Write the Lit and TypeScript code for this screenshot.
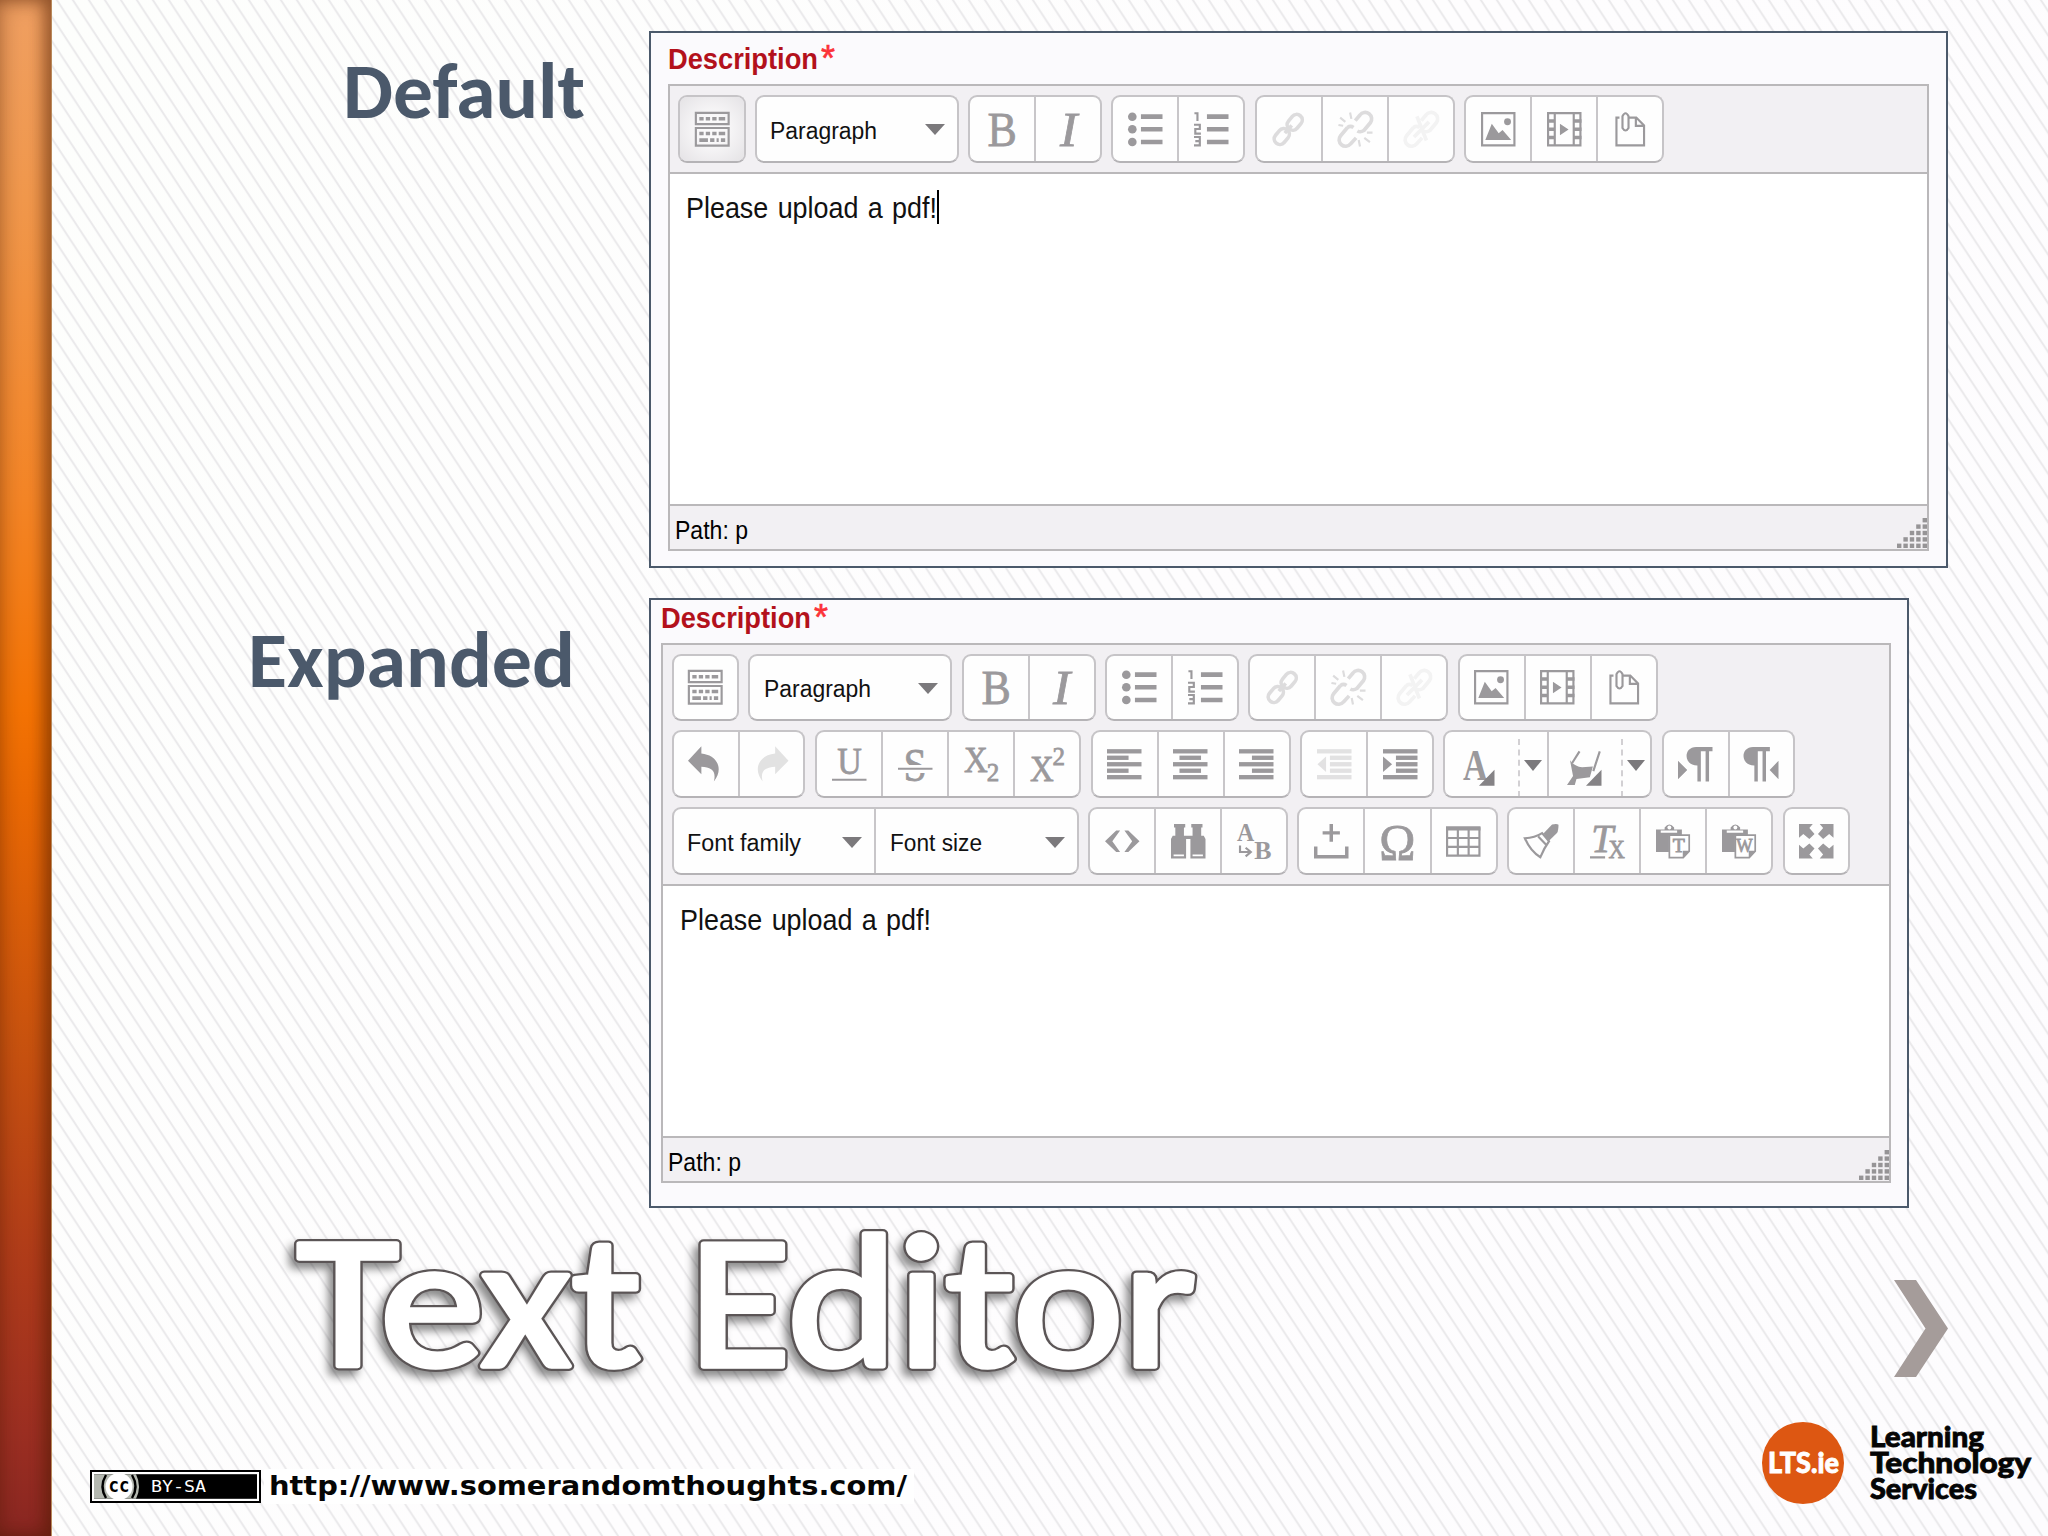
import { LitElement, html, svg, css, nothing, TemplateResult } from "lit";
import { customElement, property } from "lit/decorators.js";

type Glyph = TemplateResult;

const letter = (ch: string, x: number, y: number, size: number, len: number, cls = "") =>
  svg`<text class="glyph ${cls}" x=${x} y=${y} font-size=${size} textLength=${len} lengthAdjust="spacingAndGlyphs">${ch}</text>`;

const bars = (rows: number[][]) =>
  rows.map((r, i) => svg`<rect x=${r[0]} y=${1 + i * 3} width=${r[1]} height="2"/>`);

const link = svg`<g class="line thick"><rect x="-4" y="-2.6" width="8" height="5.2" rx="2.6" transform="translate(11 4.8) rotate(-50)"/><rect x="-4" y="-2.6" width="8" height="5.2" rx="2.6" transform="translate(5 11.4) rotate(-50)"/><path d="M6.4 9.8L9.6 6.2"/></g>`;
const broken = svg`<g class="line thick"><path d="M8 4L10.2 1.4A2.8 2.8 0 0 1 15 5L12 8.6Q10.4 9.6 9 8.8"/><path d="M4.4 7.2L1.2 11A2.8 2.8 0 0 0 5.8 14.8L8.4 12M4.4 7.2Q5.8 6.2 7.2 7.2"/></g>`;
const clipboard = svg`<path d="M0 2.5H4V1.6Q6.2 -1.2 8.4 1.6V2.5H12V5.2H6V13H0Z"/><path class="paper" d="M2.2 3H9.8V4H2.2Z"/><circle class="paper" cx="6.2" cy="1.6" r=".9"/><path class="sheet" d="M6.2 5.2H15.4V12.6L12.6 15.6H6.2Z"/><path d="M12.4 15.8V12.4H15.6Z"/>`;

const icons: Record<string, Glyph> = {
  toggle: svg`<path class="line" d="M.4 .4H15.6V5.6H.4ZM.4 7.4H15.6V15.6H.4Z"/><path d="M2 2.3h2v1.6h-2zM5 2.3h2v1.6h-2zM8 2.3h2v1.6h-2zM11 2.3h3v1.6h-3zM2 9.2h2v1.6h-2zM5 9.2h2v1.6h-2zM8 9.2h2v1.6h-2zM11 9.2h3v1.6h-3zM2 12.2h4v1.7h-4zM7 12.2h2v1.7h-2zM10 12.2h1v1.7h-1zM12 12.2h2v1.7h-2z"/>`,
  bold: letter("B", 1.2, 15.6, 22.6, 13.6, "heavy"),
  italic: letter("I", 4.2, 15.6, 22.6, 8, "slant heavy"),
  bullets: svg`<circle cx="2" cy="2.2" r="2"/><circle cx="2" cy="8" r="2"/><circle cx="2" cy="13.9" r="2"/><path d="M6 1.1H16V3.2H6ZM6 7H16V9.1H6ZM6 12.9H16V15H6Z"/>`,
  numbers: svg`<path d="M6 1.1H16V3.2H6ZM6 7H16V9.1H6ZM6 12.9H16V15H6Z"/><path class="line" d="M.2 .6H1.6V4.2M0 5.9H2.7V7.9H.6V10H3.2M0 11.6H2.7V15.5H0M.6 13.5H2.7"/>`,
  link: svg`<g class="off">${link}</g>`,
  unlink: svg`<g class="off">${broken}<path class="line" d="M1 2.6L3.4 4.6M5.6 .2L6.2 3.2M.2 6L2.4 6.4M13.4 9.6H16M12.2 12L14.8 14M9.6 13L10.2 16"/></g>`,
  nolink: svg`<g class="faint">${broken}<path class="line thick" d="M6 2L10.4 13.2M4.6 11.6L11.6 4.6"/></g>`,
  image: svg`<path class="line" d="M.5 .5H15.5V15.5H.5Z"/><path d="M2 13L5 5.4L8.2 9.8L10 8.4L14 13Z"/><circle cx="12.3" cy="4.5" r="1.6"/>`,
  media: svg`<path class="line" d="M.5 .5H15.5V15.5H.5ZM3.6 .5V15.5M12.4 .5V15.5"/><path d="M0 3.4h3.6v1.6h-3.6zM0 7.2h3.6v1.6h-3.6zM0 11h3.6v1.6h-3.6zM12.4 3.4h3.6v1.6h-3.6zM12.4 7.2h3.6v1.6h-3.6zM12.4 11h3.6v1.6h-3.6zM6 5.4L10 8.1L6 10.8Z"/>`,
  attach: svg`<path class="line" d="M3 2.6H1.6V15.5H14.4V6.2L10.8 2.6H6.8M10.6 2.6V6.4H14.4M4.4 3.6V7.4Q5.8 9.8 7.2 7.4V2Q5.8 -.8 4.4 2V3.6"/>`,
  undo: svg`<path d="M0 6.4L6.2 -.4V3C13 3.6 17 9.6 12 16C13.2 11 11 9.6 6.2 9.2V12.6Z"/>`,
  redo: svg`<g class="pale"><path d="M16 6.4L9.8 -.4V3C3 3.6 -1 9.6 4 16C2.8 11 5 9.6 9.8 9.2V12.6Z"/></g>`,
  underline: svg`${letter("U", 2.4, 12.6, 18, 11.4, "heavy")}<path d="M0 14.7H16V15.7H0Z"/>`,
  strike: svg`${letter("S", 2.6, 15.6, 22, 10.8, "heavy")}<path class="paper" d="M0 8.4H16V12H0Z"/><path d="M0 9.6H16V10.6H0Z"/>`,
  sub: svg`${letter("X", 0, 11.6, 16.6, 11, "heavy")}${letter("2", 10.6, 15.6, 11.4, 5.8, "heavy")}`,
  sup: svg`${letter("X", 0, 15.6, 16.6, 11, "heavy")}${letter("2", 10.4, 8.2, 11.4, 5.8, "heavy")}`,
  left: svg`${bars([[0, 16], [0, 10], [0, 16], [0, 10], [0, 16]])}`,
  center: svg`${bars([[0, 16], [3, 10], [0, 16], [3, 10], [0, 16]])}`,
  right: svg`${bars([[0, 16], [6, 10], [0, 16], [6, 10], [0, 16]])}`,
  outdent: svg`<g class="pale">${bars([[0, 16], [6, 10], [6, 10], [6, 10], [0, 16]])}<path d="M4.2 4.4V11.6L.2 8Z"/></g>`,
  indent: svg`${bars([[0, 16], [6, 10], [6, 10], [6, 10], [0, 16]])}<path d="M0 4.4V11.6L4.2 8Z"/>`,
  color: svg`${letter("A", 0, 15.4, 20.5, 11.4, "black")}<path class="dark" d="M14.6 10.6V18H7.4Z"/>`,
  marker: svg`<path class="line" d="M5.8 2L2.4 7.4M15.2 2L12.2 11.2"/><path d="M1.4 6.2Q3.4 9 7 9.4L12 9L10.6 14L4.4 14.8L3.6 17.6H0L2.8 13.4Z"/><path class="dark" d="M16 10.6V18H8.8Z"/>`,
  ltr: svg`<path d="M0 6.4V15L4.3 10.7ZM16 0V2H14.4V16H12.8V2H10.6V16H9V8.6C2.4 8.6 2.4 0 8.4 0Z"/>`,
  rtl: svg`<path d="M16 6.4V15L11.9 10.7ZM12 0V2H10.2V16H8.6V2H6.4V16H4.8V8.6C-1.8 8.6 -1.8 0 4.2 0Z"/>`,
  code: svg`<path d="M5.2 3H7L3.4 8L7 13H5.2L0 8ZM10.8 3H9L12.6 8L9 13H10.8L16 8Z"/>`,
  find: svg`<path d="M1.4 0H6.6V1.6H6V5.4H10V1.6H9.4V0H14.6V1.6H14V5.4H15.2L16 7V16H9V7H7V16H0V7L.8 5.4H2V1.6H1.4Z"/><path class="paper" d="M1.2 14.2H6V15H1.2ZM10 14.2H14.8V15H10Z"/>`,
  replace: svg`${letter("A", 0, 7.8, 11.4, 8, "black")}${letter("B", 8, 16, 11.8, 8, "black")}<path class="line" d="M1.4 10V13H6M4 11L6.4 13L4 15"/>`,
  nbsp: svg`<path d="M7.2 0H8.8V3.4H12V4.9H8.8V8.2H7.2V4.9H4V3.4H7.2ZM0 10.4H1.6V14.4H14.4V10.4H16V16H0Z"/>`,
  omega: letter("Ω", -.4, 16, 23.4, 16.8, "heavy"),
  table: svg`<path d="M0 1H16V3H0Z"/><path class="line" d="M.5 1.5V14.7H15.5V1.5M.5 6.5H15.5M.5 10.6H15.5M5.5 2V14.7M10.5 2V14.7"/>`,
  brush: svg`<path d="M9 4.4L13 .2Q15.4 -.4 16 .4Q16 3 15.4 4L11.6 7.8Z"/><path class="line" d="M.4 6.6Q5 6.4 8.4 4.2L11.6 8Q9.4 11 7.6 15.4Q3 12.6 .4 6.6ZM6.6 5.8L10.6 10"/>`,
  clear: svg`${letter("T", .6, 13, 18.6, 10.2, "slant heavy")}${letter("X", 8.6, 15.8, 12, 7.6, "heavy")}<path d="M0 15H7V16H0Z"/>`,
  pasteText: svg`${clipboard}${letter("T", 7.8, 13, 8.4, 5.6, "heavy")}`,
  pasteWord: svg`${clipboard}${letter("W", 6.6, 13, 8.4, 7.6, "heavy")}`,
  full: svg`<path d="M0 0H6.4L4.8 1.8L7.2 4.6L4.8 7L2 4.6L0 6.4ZM16 0H9.6L11.2 1.8L8.8 4.6L11.2 7L14 4.6L16 6.4ZM0 16H6.4L4.8 14.2L7.2 11.4L4.8 9L2 11.4L0 9.6ZM16 16H9.6L11.2 14.2L8.8 11.4L11.2 9L14 11.4L16 9.6Z"/>`,
};

interface Select { label: string; width: number }
type Item = string | Select;
interface Group { items: Item[]; width: number; split?: boolean }

const cells = (...items: string[]): Group => ({ items, width: items.length * 66.3 + 1.3 });

const rowOne: Group[] = [
  cells("toggle"),
  { items: [{ label: "Paragraph", width: 107 }], width: 204 },
  cells("bold", "italic"),
  cells("bullets", "numbers"),
  cells("link", "unlink", "nolink"),
  cells("image", "media", "attach"),
];
const rowTwo: Group[] = [
  cells("undo", "redo"),
  cells("underline", "strike", "sub", "sup"),
  cells("left", "center", "right"),
  cells("outdent", "indent"),
  { items: ["color", "marker"], width: 209, split: true },
  cells("ltr", "rtl"),
];
const rowThree: Group[] = [
  { items: [{ label: "Font family", width: 114 }, { label: "Font size", width: 92 }], width: 407 },
  cells("code", "find", "replace"),
  cells("nbsp", "omega", "table"),
  cells("brush", "clear", "pasteText", "pasteWord"),
  cells("full"),
];

const fitted = (text: string, cls: string, w: number, h: number, base: number) =>
  html`<svg class="fit ${cls}" width=${w} height=${h}><text x="0" y=${base} textLength=${w} lengthAdjust="spacingAndGlyphs">${text}</text></svg>`;

const fitCss = css`
  .fit { display: block; flex: none; overflow: visible; font-family: "Liberation Sans", Arial, sans-serif; }
`;

@customElement("text-editor")
class TextEditor extends LitElement {
  @property({ attribute: false }) rows: Group[] = [];
  @property({ type: Boolean }) pressed = false;
  @property({ type: Boolean }) caret = false;

  static styles = [fitCss, css`
    :host { display: flex; flex-direction: column; box-sizing: border-box; border: 2px solid #bab8ba; background: #fff; }
    .toolbar { display: flex; flex-direction: column; gap: 9.4px; padding: 9px 8.6px; background: #f2f0f3; border-bottom: 2px solid #bab8ba; }
    .row { display: flex; gap: 9.3px; }
    .group { display: flex; flex: none; box-sizing: border-box; height: 67.6px; border: 2px solid #c6c4c7; border-bottom-color: #b5b3b6; border-radius: 9px; background: #fefefe; overflow: hidden; }
    .cell { flex: 1 1 0; display: flex; align-items: center; justify-content: center; }
    .cell + .cell { border-left: 2px solid #c8c6c9; }
    .pressed { background: radial-gradient(circle at 50% 50%, #fbfafb 25%, #e4e2e5 100%); }
    .select { justify-content: space-between; padding: 4px 12px 0 13.5px; }
    .split { justify-content: flex-start; padding-left: 18px; }
    .divider { height: 58px; margin: 7px 4px 0 20px; border-left: 2px dashed #d2d0d3; }
    .icon { display: block; flex: none; width: 34.5px; height: 34.5px; overflow: visible; fill: #9b999c; }
    .arrow { display: block; flex: none; width: 20px; height: 11px; fill: #7b797c; margin-top: -2px; }
    .arrow.small { width: 18px; margin: 2px 0 0; }
    .line { fill: none; stroke: #9b999c; stroke-width: 1; }
    .thick, .thick * { stroke-width: 1.7; }
    .paper { fill: #fff; }
    .sheet { fill: #fff; stroke: #9b999c; stroke-width: .8; }
    .dark { fill: #858386; }
    .glyph { font-family: "Liberation Serif", "Times New Roman", serif; }
    .heavy { stroke: #9b999c; stroke-width: .35; }
    .black { font-weight: 700; }
    .slant { font-style: italic; }
    .off { opacity: .33; }
    .pale { opacity: .28; }
    .faint { opacity: .11; }
    .body { flex: 1; display: flex; align-items: flex-start; padding: 16px 16.5px; }
    .copy { font-size: 29px; fill: #111; word-spacing: 2px; }
    .caret { width: 2px; height: 34px; background: #000; }
    .status { display: flex; justify-content: space-between; align-items: flex-end; height: 43px; padding-left: 5px; background: #f2f0f3; border-top: 2px solid #bab8ba; }
    .path { font-size: 26px; fill: #000; }
    .name { font-size: 23px; fill: #111; }
    .grip { display: block; fill: #969496; }
  `];

  private icon(name: string) {
    return html`<svg class="icon" viewBox="0 0 16 16">${icons[name]}</svg>`;
  }

  private arrow(small = false) {
    return html`<svg class="arrow ${small ? "small" : ""}" viewBox="0 0 20 11" preserveAspectRatio="none"><path d="M0 0H20L10 11Z"/></svg>`;
  }

  private cell(item: Item, group: Group) {
    if (typeof item !== "string")
      return html`<div class="cell select">${fitted(item.label, "name", item.width, 26, 21)}${this.arrow()}</div>`;
    if (group.split)
      return html`<div class="cell split">${this.icon(item)}<span class="divider"></span>${this.arrow(true)}</div>`;
    return html`<div class="cell ${item === "toggle" && this.pressed ? "pressed" : ""}">${this.icon(item)}</div>`;
  }

  render() {
    const dots: TemplateResult[] = [];
    for (let r = 0; r < 5; r++)
      for (let c = 4 - r; c < 5; c++)
        dots.push(svg`<rect x=${c * 6.4} y=${r * 6.4} width="4.4" height="4.4"/>`);
    return html`
      <div class="toolbar">
        ${this.rows.map((row) => html`<div class="row">${row.map((g) => html`
          <div class="group" style="width:${g.width}px">${g.items.map((i) => this.cell(i, g))}</div>`)}</div>`)}
      </div>
      <div class="body">
        ${fitted("Please upload a pdf!", "copy", 251, 34, 28.2)}
        ${this.caret ? html`<span class="caret"></span>` : nothing}
      </div>
      <div class="status">
        ${fitted("Path: p", "path", 73, 43, 32.5)}
        <svg class="grip" width="30" height="31">${dots}</svg>
      </div>`;
  }
}

@customElement("app-root")
class AppRoot extends LitElement {
  static styles = [fitCss, css`
    :host { display: block; width: 2048px; height: 1536px; overflow: hidden; }
    .slide { display: grid; grid-template-columns: 52px 1fr; width: 2048px; height: 1536px; position: relative; background: linear-gradient(120deg, #fdfefc, #fefdfe 50%, #fdfcfe); }
    .stripes { position: absolute; inset: 0; width: 100%; height: 100%; }
    .bar { position: relative; border-right: 1px solid #b98a5c; box-sizing: border-box; background: linear-gradient(180deg, #f0a062 0, #f1984c 200px, #f48526 500px, #f47304 710px, #ea6904 800px, #c9530f 1040px, #b03c1a 1260px, #9c2f22 1430px, #8a2722 1536px); box-shadow: inset 0 0 22px rgba(70, 25, 0, .42), inset -8px 0 14px rgba(80, 30, 0, .35); }
    .main { position: relative; display: flex; flex-direction: column; padding-top: 30.5px; }
    .section { display: flex; align-items: flex-start; margin-bottom: 30px; }
    .side { width: 597px; flex: none; display: flex; justify-content: flex-end; box-sizing: border-box; }
    .first { padding: 27.5px 64px 0 0; }
    .second { padding: 28.5px 74px 0 0; }
    .head { font-family: Carlito, Lato, sans-serif; font-weight: 700; font-size: 78px; fill: #4b596b; }
    .panel { display: flex; flex-direction: column; box-sizing: border-box; border: 2px solid #4b596b; background: #fbfafd; }
    .one { width: 1298.5px; height: 537.5px; padding: 0 17px 15.5px 16.5px; }
    .two { width: 1260px; height: 610px; padding: 0 16.5px 23.5px 10px; }
    .field { display: flex; flex: none; }
    .one .field { height: 51.5px; }
    .two .field { height: 42.5px; }
    .desc { font-size: 29px; font-weight: 700; fill: #b3111c; }
    .star { font-size: 36px; fill: #fb3238; stroke: #fb3238; stroke-width: .6; margin-left: 3px; }
    .editor { flex: 1; }
    .lower { display: flex; justify-content: space-between; height: 190px; margin-top: -30px; }
    .title { display: block; overflow: visible; font-family: Carlito, Lato, sans-serif; font-weight: 400; font-size: 190px; stroke-linejoin: round; }
    .edge { fill: #5b5556; stroke: #5b5556; stroke-width: 10px; filter: drop-shadow(-5px 6px 4px rgba(0, 0, 0, .45)); }
    .face { fill: #fff; stroke: #fff; stroke-width: 5.5px; }
    .chevron { display: block; margin: 72px 100px 0 0; fill: #a59c9a; }
    .footer { display: flex; justify-content: space-between; align-items: flex-start; }
    .credit { display: flex; align-items: center; margin: 71px 0 0 37.5px; }
    .badge { display: block; }
    .url { display: flex; background: #fff; height: 35px; margin-left: 3px; padding: 0 7px 0 5px; }
    .address { font-family: "DejaVu Sans", Verdana, sans-serif; font-size: 26px; font-weight: 700; fill: #050505; }
    .brand { display: flex; margin: 24px 17px 0 0; }
    .round { display: block; margin-right: 26px; }
    .heavy { font-family: Lato, sans-serif; font-weight: 900; font-size: 28px; stroke-width: .8; }
    .lines { display: flex; flex-direction: column; padding-top: 3px; }
    .ink { fill: #050505; stroke: #050505; }
    .mono { font-family: "DejaVu Sans Mono", monospace; }
  `];

  render() {
    return html`
      <div class="slide">
        <svg class="stripes">
          <defs><pattern id="p" width="16" height="24.35" patternUnits="userSpaceOnUse" patternTransform="translate(8.8 0)">
            <path d="M-16 -24.35L32 48.7M-16 0L16 48.7M0 -24.35L32 24.35" stroke="#e9e8ea" stroke-width="1.9" fill="none"/>
          </pattern></defs>
          <rect width="2048" height="1536" fill="url(#p)"/>
        </svg>
        <div class="bar"></div>
        <div class="main">
          <div class="section">
            <div class="side first">${fitted("Default", "head", 242, 80, 60)}</div>
            <div class="panel one">
              <div class="field">${fitted("Description", "desc", 150, 44, 36)}${fitted("*", "star", 14, 44, 37.5)}</div>
              <text-editor class="editor" .rows=${[rowOne]} pressed caret></text-editor>
            </div>
          </div>
          <div class="section">
            <div class="side second">${fitted("Expanded", "head", 327, 80, 60)}</div>
            <div class="panel two">
              <div class="field">${fitted("Description", "desc", 150, 40, 28)}${fitted("*", "star", 14, 40, 29.5)}</div>
              <text-editor class="editor" .rows=${[rowOne, rowTwo, rowThree]}></text-editor>
            </div>
          </div>
          <div class="lower">
            <svg class="title" width="1200" height="190">
              <use class="edge" href="#t"/>
              <g class="face"><text id="t" x="245" y="158" textLength="899" lengthAdjust="spacingAndGlyphs">Text Editor</text></g>
            </svg>
            <svg class="chevron" width="54" height="97"><path d="M0 0H22L54 48.5L22 97H0L31.5 48.5Z"/></svg>
          </div>
          <div class="footer">
            <div class="credit">
              <svg class="badge" width="171" height="33">
                <rect width="171" height="33" fill="#000"/><rect x="2" y="2" width="167" height="29" fill="#fff"/>
                <rect x="4" y="4.2" width="163" height="24.6" fill="#000"/><path d="M4 4.2H46Q52 16.5 46 28.8H4Z" fill="#b4b8b0"/>
                <circle cx="29" cy="16.5" r="13.5" fill="#fff"/><path d="M16 5Q9 16.5 16 28M42 5Q49 16.5 42 28" fill="none" stroke="#000" stroke-width="2.4"/>
                <text class="mono" x="18.5" y="22" font-size="19" font-weight="700" textLength="21" lengthAdjust="spacingAndGlyphs">cc</text>
                <text class="mono" x="61" y="21.5" font-size="15.5" fill="#fff" textLength="55" lengthAdjust="spacingAndGlyphs">BY-SA</text>
              </svg>
              <div class="url">${fitted("http://www.somerandomthoughts.com/", "address", 638, 35, 26)}</div>
            </div>
            <div class="brand">
              <svg class="round" width="82" height="82"><circle cx="41" cy="41" r="41" fill="#dd5712"/>
                <text class="heavy" x="6" y="50.5" fill="#fff" stroke="#fff" textLength="71" lengthAdjust="spacingAndGlyphs">LTS.ie</text></svg>
              <div class="lines">
                ${fitted("Learning", "heavy ink", 114, 26, 21.5)}
                ${fitted("Technology", "heavy ink", 161, 26, 21.5)}
                ${fitted("Services", "heavy ink", 107, 26, 21.5)}
              </div>
            </div>
          </div>
        </div>
      </div>`;
  }
}
